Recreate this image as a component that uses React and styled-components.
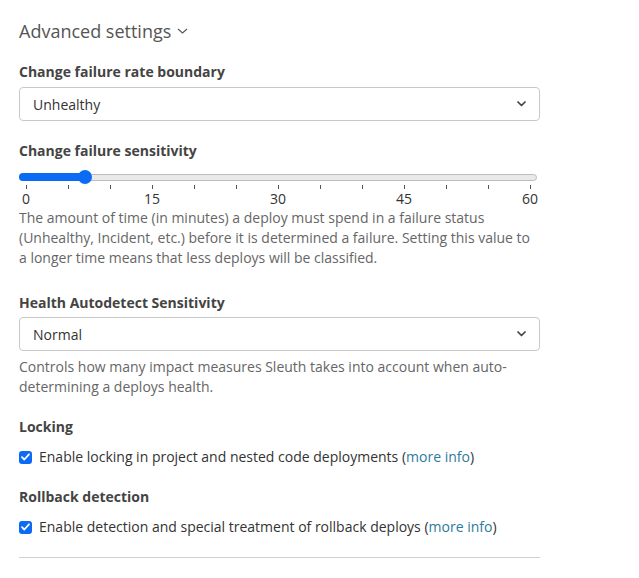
import React, { useState } from 'react';
import styled, { createGlobalStyle } from 'styled-components';

const GlobalStyle = createGlobalStyle`
  body {
    margin: 0;
    background: #fff;
    font-family: "Open Sans", "Liberation Sans", sans-serif;
    color: #333;
  }
`;

const Container = styled.div`
  width: 521px;
  padding: 17px 19px 0;
`;

const Heading = styled.button`
  display: flex;
  align-items: center;
  gap: 6px;
  padding: 0;
  border: none;
  background: none;
  font: inherit;
  font-size: 18px;
  line-height: 28px;
  color: #555;
  margin-bottom: 17px;
  cursor: pointer;
`;

const Field = styled.div`
  margin-bottom: ${(p) => p.$gap || 20}px;
`;

const Label = styled.div`
  font-size: 14px;
  line-height: 20px;
  font-weight: 700;
  color: #444;
  margin-bottom: ${(p) => p.$gap || 5}px;
`;

const SelectWrap = styled.div`
  position: relative;
`;

const Select = styled.select`
  appearance: none;
  width: 100%;
  height: 34px;
  padding: 0 13px;
  border: 1px solid #c8c8c8;
  border-radius: 4px;
  background: #fff;
  font: inherit;
  font-size: 14px;
  color: #333;
`;

const Caret = styled.svg`
  position: absolute;
  right: 14px;
  top: 14px;
  pointer-events: none;
`;

const Help = styled.p`
  margin: ${(p) => p.$top || 0}px 0 0;
  font-size: 14px;
  line-height: 20px;
  color: #666;
`;

const Slider = styled.div`
  position: relative;
  height: 16px;
  margin-right: 3px;
  display: flex;
  align-items: center;
`;

const Track = styled.div`
  width: 100%;
  height: 7px;
  box-sizing: border-box;
  border: 1px solid #bdbdbd;
  border-radius: 4px;
  background: #e9e9e9;
`;

const Fill = styled.div`
  position: absolute;
  left: 0;
  top: 4px;
  height: 8px;
  border-radius: 4px;
  background: #0b6bf5;
`;

const Thumb = styled.div`
  position: absolute;
  top: 1px;
  width: 14px;
  height: 14px;
  margin-left: -7px;
  border-radius: 50%;
  background: #0b6bf5;
`;

const Scale = styled.div`
  display: flex;
  justify-content: space-between;
  padding: 0 10px 0 7px;
`;

const Tick = styled.div`
  width: 0;
  display: flex;
  flex-direction: column;
  align-items: center;
`;

const TickMark = styled.span`
  width: 1px;
  height: 4px;
  background: #555;
`;

const TickLabel = styled.span`
  font-size: 14px;
  line-height: 20px;
  color: #333;
  white-space: nowrap;
  visibility: ${(p) => (p.$show ? 'visible' : 'hidden')};
`;

const CheckRow = styled.label`
  display: flex;
  align-items: center;
  gap: 7px;
  font-size: 14px;
  line-height: 20px;
  color: #333;
  cursor: pointer;
`;

const Box = styled.span`
  width: 13px;
  height: 13px;
  border-radius: 3px;
  background: #0b6bf5;
  display: flex;
  align-items: center;
  justify-content: center;
  flex-shrink: 0;
`;

const Link = styled.a`
  color: #2b7c9b;
  text-decoration: none;
`;

const Divider = styled.hr`
  margin: 0;
  border: none;
  border-top: 1px solid #d0d0d0;
`;

const Chevron = () => (
  <Caret width="9" height="6" viewBox="0 0 9 6">
    <path d="M1 1l3.5 3.5L8 1" fill="none" stroke="#444" strokeWidth="1.7" strokeLinecap="round" strokeLinejoin="round" />
  </Caret>
);

const Check = ({ label, href }) => (
  <CheckRow>
    <Box>
      <svg width="9" height="8" viewBox="0 0 9 8">
        <path d="M1 4.2l2.3 2.3L8 1.3" fill="none" stroke="#fff" strokeWidth="1.8" strokeLinecap="round" strokeLinejoin="round" />
      </svg>
    </Box>
    <span>
      {label} (<Link href={href}>more info</Link>)
    </span>
  </CheckRow>
);

const ticks = Array.from({ length: 13 }, (_, i) => i * 5);

export default function App() {
  const [value] = useState(7);
  const pos = 7 + (value / 60) * 504;

  return (
    <Container>
      <GlobalStyle />
      <Heading>
        Advanced settings
        <svg width="11" height="6" viewBox="0 0 11 6">
          <path d="M1 1l4.5 4 4.5-4" fill="none" stroke="#555" strokeWidth="1.1" />
        </svg>
      </Heading>

      <Field>
        <Label>Change failure rate boundary</Label>
        <SelectWrap>
          <Select defaultValue="unhealthy">
            <option value="unhealthy">Unhealthy</option>
            <option value="incident">Incident</option>
          </Select>
          <Chevron />
        </SelectWrap>
      </Field>

      <Field $gap={25}>
        <Label $gap={8}>Change failure sensitivity</Label>
        <Slider>
          <Track />
          <Fill style={{ width: pos }} />
          <Thumb style={{ left: pos }} />
        </Slider>
        <Scale>
          {ticks.map((t) => (
            <Tick key={t}>
              <TickMark />
              <TickLabel $show={t % 15 === 0}>{t}</TickLabel>
            </Tick>
          ))}
        </Scale>
        <Help $top={-1}>
          The amount of time (in minutes) a deploy must spend in a failure status
          (Unhealthy, Incident, etc.) before it is determined a failure. Setting this value to
          a longer time means that less deploys will be classified.
        </Help>
      </Field>

      <Field $gap={20}>
        <Label $gap={4}>Health Autodetect Sensitivity</Label>
        <SelectWrap>
          <Select defaultValue="normal">
            <option value="normal">Normal</option>
            <option value="high">High</option>
          </Select>
          <Chevron />
        </SelectWrap>
        <Help $top={6}>
          Controls how many impact measures Sleuth takes into account when auto-
          determining a deploys health.
        </Help>
      </Field>

      <Field>
        <Label $gap={10}>Locking</Label>
        <Check label="Enable locking in project and nested code deployments" href="#" />
      </Field>

      <Field>
        <Label $gap={10}>Rollback detection</Label>
        <Check label="Enable detection and special treatment of rollback deploys" href="#" />
      </Field>

      <Divider />
    </Container>
  );
}
